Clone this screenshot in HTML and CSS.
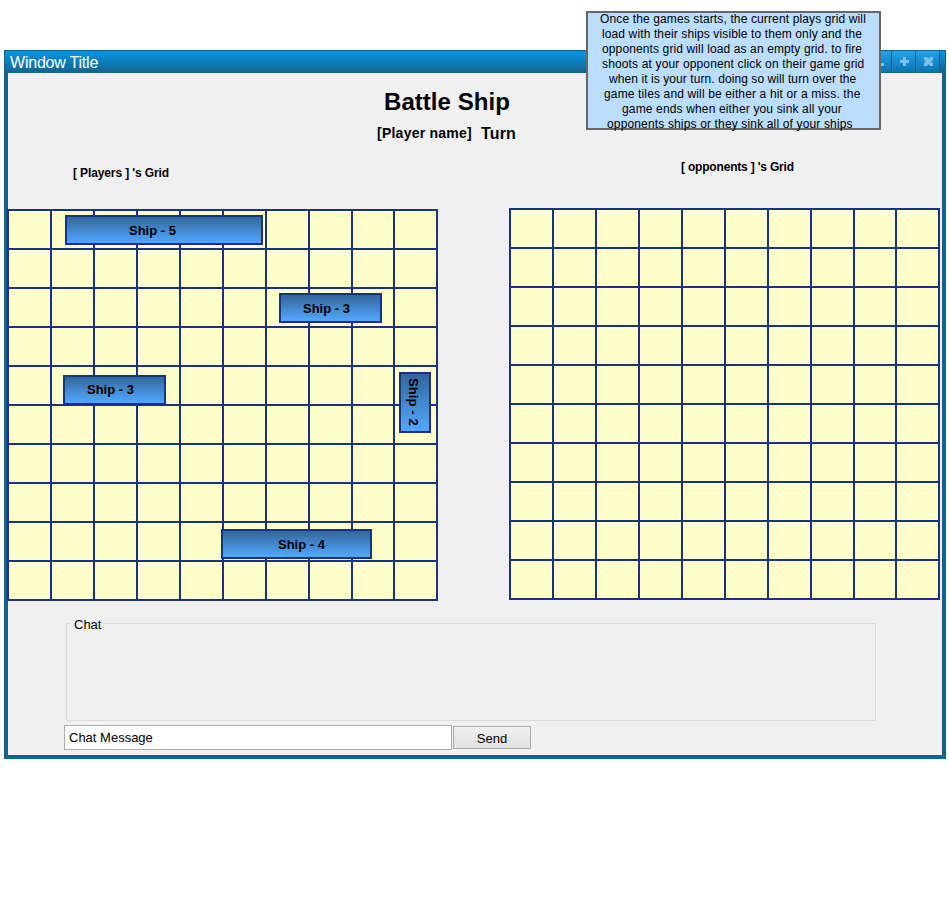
FILE: index.html
```html
<!DOCTYPE html>
<html lang="en">
<head>
<meta charset="utf-8">
<title>Battle Ship</title>
<link rel="stylesheet" href="styles.css">
</head>
<body>
<main class="window">
  <header class="titlebar">
    <span class="window-title">Window Title</span>
    <div class="controls">
      <span class="control"><svg width="12" height="12" viewBox="0 0 12 12"><path d="M1 7h9v3H1z"/></svg></span>
      <span class="control"><svg width="12" height="12" viewBox="0 0 12 12"><path d="M5 1h3v3h3v3H8v3H5V7H2V4h3z"/></svg></span>
      <span class="control"><svg width="12" height="12" viewBox="0 0 12 12"><path d="M2 1h3l1.500 2L8 1h3v3L9 5.500 11 7v3H8L6.500 8 5 10H2V7l2-1.500L2 4z"/></svg></span>
    </div>
  </header>
  <h1 class="game-title">Battle Ship</h1>
  <div class="turn"><span class="player">[Player name]</span><span class="turn-word">Turn</span></div>
  <section class="boards">
    <div class="side">
      <h2 class="caption caption-player">[ Players ] 's Grid</h2>
      <div class="board">
        <div class="ship ship-five"><span>Ship - 5</span></div>
        <div class="ship ship-three-a"><span>Ship - 3</span></div>
        <div class="ship ship-three-b"><span>Ship - 3</span></div>
        <div class="ship ship-two"><span>Ship - 2</span></div>
        <div class="ship ship-four"><span>Ship - 4</span></div>
      </div>
    </div>
    <div class="side side-opponent">
      <h2 class="caption caption-opponent">[ opponents ] 's Grid</h2>
      <div class="board"></div>
    </div>
  </section>
  <section class="chat"><span class="chat-label">Chat</span></section>
  <form class="composer">
    <input class="message" type="text" value="Chat Message" aria-label="Chat message">
    <button class="send" type="button">Send</button>
  </form>
</main>
<aside class="note">
  <span class="l1">Once the games starts, the current plays grid will</span>
  <span class="l2">load with their ships visible to them only and the</span>
  <span class="l3">opponents grid will load as an empty grid. to fire</span>
  <span class="l4">shoots at your opponent click on their game grid</span>
  <span class="l5">when it is your turn. doing so will turn over the</span>
  <span class="l6">game tiles and will be either a hit or a miss. the</span>
  <span class="l7">game ends when either you sink all your</span>
  <span class="l8">opponents ships or they sink all of your ships</span>
</aside>
<script src="board.js"></script>
</body>
</html>
```
FILE: styles.css
```css
* { box-sizing: border-box; }
body {
  margin: 0;
  padding: 50px 2px 0 4px;
  background: #fff;
  color: #000;
  font-family: "Liberation Sans", Arial, sans-serif;
}
h1, h2 { margin: 0; }
.window {
  height: 709px;
  border: 4px solid #14638d;
  border-top: 0;
  background: #f0f0f0;
}
.titlebar {
  display: flex;
  justify-content: space-between;
  height: 23px;
  margin: 0 -4px;
  border: 1px solid #14638d;
  border-bottom: 0;
  background: linear-gradient(#0596e6, #14638d);
}
.window-title {
  padding-left: 5px;
  color: #fff;
  font-size: 16px;
  letter-spacing: -0.22px;
  line-height: 23px;
}
.controls {
  display: flex;
  margin-right: 5px;
  border-right: 1px solid #14638d;
}
.control {
  display: flex;
  align-items: center;
  justify-content: center;
  width: 24px;
  height: 22px;
  border-left: 1px solid #14638d;
  border-bottom: 1px solid #14638d;
  background: linear-gradient(#22a2ec, #0a74b3);
}
.control svg { fill: #7fc0e8; }
.game-title {
  margin-top: 15px;
  padding-left: 376px;
  font-size: 24px;
  letter-spacing: 0.05px;
  line-height: 28px;
}
.turn {
  display: flex;
  padding: 8px 0 0 369px;
  font-weight: bold;
  line-height: 18px;
}
.player { width: 104px; font-size: 14px; letter-spacing: 0.24px; }
.turn-word { font-size: 16px; padding-top: 1px; letter-spacing: 0.15px; }
.boards {
  display: flex;
  height: 480px;
  margin-left: -1px;
}
.side { width: 431px; }
.side-opponent { margin-left: 71px; }
.caption { font-size: 12px; line-height: 14px; white-space: nowrap; }
.caption-player { padding: 23px 0 29px 66px; letter-spacing: -0.12px; }
.caption-opponent { padding: 17px 0 34px 172px; letter-spacing: -0.19px; }
.board {
  position: relative;
  display: grid;
  grid-template-columns: repeat(8, 43px) 42px 43px;
  grid-auto-rows: 39px;
  width: 431px;
  height: 392px;
  border: solid #1b3281;
  border-width: 0 2px 2px 0;
  background: #ffffcc;
}
.cell { border: solid #1b3281; border-width: 2px 0 0 2px; }
/* Ships are placed freely over the board. */
.ship {
  position: absolute;
  height: 30px;
  border: 2px solid #1b3281;
  background: linear-gradient(#33669a, #52a8ff);
  font-size: 13px;
  font-weight: bold;
  line-height: 28px;
  white-space: nowrap;
}
.ship-five { left: 58px; top: 6px; width: 198px; padding-left: 62px; }
.ship-three-a { left: 272px; top: 84px; width: 103px; padding-left: 22px; }
.ship-three-b { left: 56px; top: 166px; width: 103px; padding-left: 22px; line-height: 26px; }
.ship-four { left: 214px; top: 320px; width: 151px; padding-left: 55px; }
.ship-two {
  left: 392px;
  top: 163px;
  width: 32px;
  height: 61px;
  padding-top: 4px;
}
.ship-two span { writing-mode: vertical-rl; line-height: 24px; display: block; letter-spacing: 0.1px; }
.chat {
  width: 810px;
  height: 98px;
  margin: 0 0 0 58px;
  border: 1px solid #dcdcdc;
}
.chat-label {
  display: block;
  width: 32px;
  margin: -8px 0 0 4px;
  padding-left: 3px;
  background: #f0f0f0;
  font-size: 13px;
  line-height: 18px;
}
.composer { display: flex; align-items: flex-start; margin: 4px 0 0 56px; }
.message {
  width: 388px;
  height: 25px;
  padding: 0 4px;
  border: 1px solid #abadb3;
  background: #fff;
  color: #000;
  font: 13px "Liberation Sans", Arial, sans-serif;
}
.send {
  width: 78px;
  height: 23px;
  margin: 1px 0 0 1px;
  padding: 1px 0 0;
  border: 1px solid #aaa;
  background: linear-gradient(#f0f0f0, #e1e1e1);
  color: #000;
  font: 13px "Liberation Sans", Arial, sans-serif;
}
/* Annotation laid over the window corner. */
.note {
  position: absolute;
  left: 586px;
  top: 11px;
  width: 295px;
  height: 119px;
  border: 2px solid #666;
  background: #bbddff;
  font-size: 12px;
  line-height: 15px;
}
.note span { display: block; white-space: nowrap; }
.note .l1 { margin-top: -1px; padding-left: 12px; letter-spacing: 0.13px; }
.l2 { padding-left: 14px; letter-spacing: 0.12px; }
.l3 { padding-left: 14px; letter-spacing: 0.12px; }
.l4 { padding-left: 14px; letter-spacing: 0.145px; }
.l5 { padding-left: 21px; letter-spacing: 0.08px; }
.l6 { padding-left: 16px; letter-spacing: 0.14px; }
.l7 { padding-left: 34px; letter-spacing: 0.15px; }
.l8 { padding-left: 19px; letter-spacing: 0.15px; }
```
FILE: board.js
```js
document.querySelectorAll('.board').forEach(function (board) {
  for (var i = 0; i < 100; i++) {
    var cell = document.createElement('div');
    cell.className = 'cell';
    board.insertBefore(cell, board.firstChild);
  }
});
```
